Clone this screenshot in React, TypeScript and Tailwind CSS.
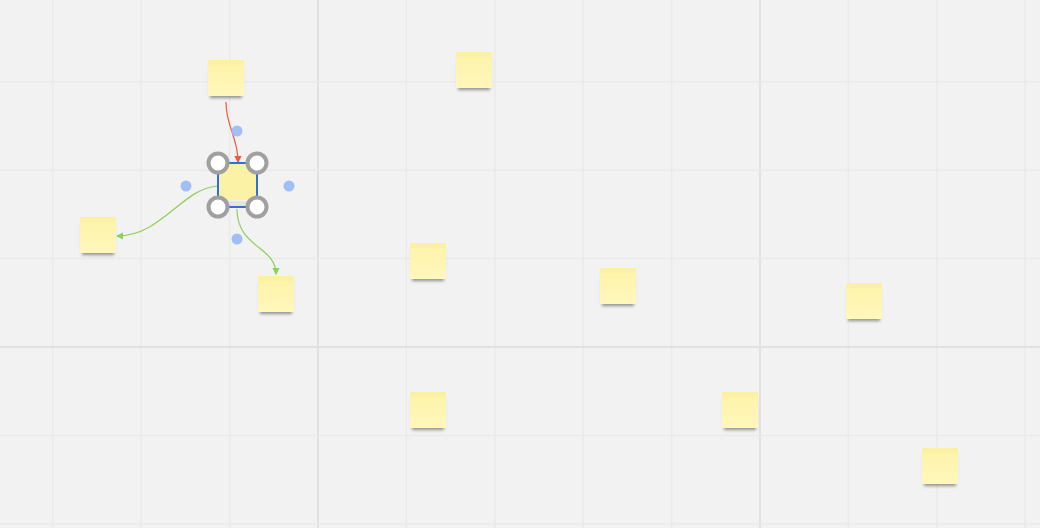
const notes = [
  { x: 208, y: 60 },
  { x: 456, y: 52 },
  { x: 80, y: 217 },
  { x: 258, y: 276 },
  { x: 410, y: 243 },
  { x: 600, y: 268 },
  { x: 846, y: 283 },
  { x: 410, y: 392 },
  { x: 722, y: 392 },
  { x: 922, y: 448 },
];

const step = 88.4;
const vLines = Array.from({ length: 13 }, (_, i) => 318 + (i - 4) * step);
const hLines = Array.from({ length: 7 }, (_, i) => 347 + (i - 4) * step);

const StickyNote = ({ x, y }: { x: number; y: number }) => (
  <div
    className="absolute h-[36px] w-[36px] bg-gradient-to-b from-[#fdf3a8] to-[#fff7bc] shadow-[0_4px_3px_-2px_rgba(0,0,0,0.4)]"
    style={{ left: x, top: y }}
  >
    <div className="h-[5px] w-full bg-[#f9ef9f]/50" />
  </div>
);

const Grid = () => (
  <svg className="absolute inset-0" width={1040} height={528}>
    {vLines.map((x, i) => {
      const major = Math.abs(x - 318) < 1 || Math.abs(x - 760) < 1;
      return (
        <line
          key={`v${i}`}
          x1={x}
          x2={x}
          y1={0}
          y2={528}
          stroke={major ? "#e1e1e1" : "#eaeaea"}
          strokeWidth={major ? 2 : 1.5}
        />
      );
    })}
    {hLines.map((y, i) => {
      const major = Math.abs(y - 347) < 1;
      return (
        <line
          key={`h${i}`}
          x1={0}
          x2={1040}
          y1={y}
          y2={y}
          stroke={major ? "#e1e1e1" : "#eaeaea"}
          strokeWidth={major ? 2 : 1.5}
        />
      );
    })}
  </svg>
);

const Overlay = () => (
  <svg className="absolute inset-0" width={1040} height={528}>
    <defs>
      <marker id="red" markerWidth="6" markerHeight="6" refX="5" refY="3" orient="auto">
        <path d="M0 0 L6 3 L0 6 z" fill="#ef5a3c" />
      </marker>
      <marker id="green" markerWidth="6" markerHeight="6" refX="5" refY="3" orient="auto">
        <path d="M0 0 L6 3 L0 6 z" fill="#8fd05a" />
      </marker>
    </defs>
    {/* connectors */}
    <path d="M226 102 C226 128 238 136 238 162" fill="none" stroke="#ef5a3c" strokeWidth={1.2} markerEnd="url(#red)" />
    <path d="M218 186 C182 188 162 236 117 236" fill="none" stroke="#8fd05a" strokeWidth={1.2} markerEnd="url(#green)" />
    <path d="M237 209 C237 248 276 246 276 274" fill="none" stroke="#8fd05a" strokeWidth={1.2} markerEnd="url(#green)" />

    {/* selected note */}
    <rect x={219} y={164} width={37} height={36} fill="#fcf2a6" />
    <rect x={223} y={201} width={30} height={5} fill="#e8e5d8" />
    <rect x={218} y={163} width={39} height={44} fill="none" stroke="#2b6fe3" strokeWidth={2} />

    {/* anchor dots */}
    {[
      [237, 131],
      [186, 186],
      [289, 186],
      [237, 239],
    ].map(([cx, cy]) => (
      <circle key={`${cx}-${cy}`} cx={cx} cy={cy} r={5.5} fill="#a2bff5" />
    ))}

    {/* resize handles */}
    {[
      [218, 163],
      [257, 163],
      [218, 207],
      [257, 207],
    ].map(([cx, cy]) => (
      <circle key={`h${cx}-${cy}`} cx={cx} cy={cy} r={9.5} fill="#ffffff" stroke="#a0a0a0" strokeWidth={4} />
    ))}
  </svg>
);

export default function App() {
  return (
    <div className="relative h-[528px] w-[1040px] overflow-hidden bg-[#f2f2f2]">
      <Grid />
      {notes.map((n, i) => (
        <StickyNote key={i} x={n.x} y={n.y} />
      ))}
      <Overlay />
    </div>
  );
}
